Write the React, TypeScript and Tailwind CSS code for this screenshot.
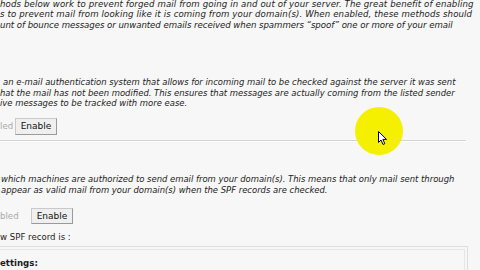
import React from 'react';

const Line = ({ children, className = '' }: { children: React.ReactNode; className?: string }) => (
  <div className={`whitespace-nowrap ${className}`}>{children}</div>
);

function App() {
  return (
    <div className="relative w-[480px] h-[270px] overflow-hidden bg-[#f7f7f7] font-['DejaVu_Sans',sans-serif] text-[8.6px] text-[#1c1c1c]">
      <div className="italic leading-[10.4px] mt-[-1px] tracking-[0.12px]">
        <Line>hods below work to prevent forged mail from going in and out of your server. The great benefit of enabling</Line>
        <Line>s to prevent mail from looking like it is coming from your domain(s). When enabled, these methods should</Line>
        <Line className="tracking-[-0.05px]">unt of bounce messages or unwanted emails received when spammers “spoof” one or more of your email</Line>
      </div>

      <div className="italic leading-[10.4px] mt-[47px] text-[8.45px]">
        <Line className="pl-[3px]">an e-mail authentication system that allows for incoming mail to be checked against the server it was sent</Line>
        <Line>hat the mail has not been modified. This ensures that messages are actually coming from the listed sender</Line>
        <Line>ive messages to be tracked with more ease.</Line>
      </div>

      <div className="flex items-center mt-[10px]">
        <span className="text-[#a8a8a8] w-[15px]">led</span>
        <button className="h-[17px] w-[42px] bg-[#efefef] border border-[#c9c9c9] border-r-[#9a9a9a] border-b-[#9a9a9a] text-[9px] text-[#111] leading-none">
          Enable
        </button>
      </div>

      <div className="mt-[5px] w-[466px] border-t border-[#d4d4d4] border-b border-b-white" />

      <div className="italic leading-[10.4px] mt-[32px] pl-[1px] text-[8.45px]">
        <Line>which machines are authorized to send email from your domain(s). This means that only mail sent through</Line>
        <Line>appear as valid mail from your domain(s) when the SPF records are checked.</Line>
      </div>

      <div className="flex items-center mt-[13px]">
        <span className="text-[#a8a8a8] w-[31px]">bled</span>
        <button className="h-[16px] w-[42px] bg-[#efefef] border border-[#c9c9c9] border-r-[#9a9a9a] border-b-[#9a9a9a] text-[9px] text-[#111] leading-none">
          Enable
        </button>
      </div>

      <div className="leading-[10px] mt-[8px]">w SPF record is :</div>

      <div className="mt-[4px] w-[468px] h-[40px] border border-[#dedede] border-l-0 p-[2px] pl-0">
        <div className="h-full border border-[#e6e6e6] border-l-0 pt-[8px]">
          <div className="font-bold leading-[10px]">ettings:</div>
        </div>
      </div>

      <div className="absolute left-[355px] top-[107px] w-[48px] h-[48px] rounded-full bg-[#f5f000]" />
      <svg className="absolute left-[378px] top-[131px]" width="10" height="15" viewBox="0 0 10 15">
        <path d="M0.5 0.5 L0.5 11.5 L3 9 L5 13.5 L6.8 12.7 L4.9 8.4 L8.5 8.4 Z" fill="#fff" stroke="#000" strokeWidth="1" strokeLinejoin="round" />
      </svg>
    </div>
  );
}

export default App;
